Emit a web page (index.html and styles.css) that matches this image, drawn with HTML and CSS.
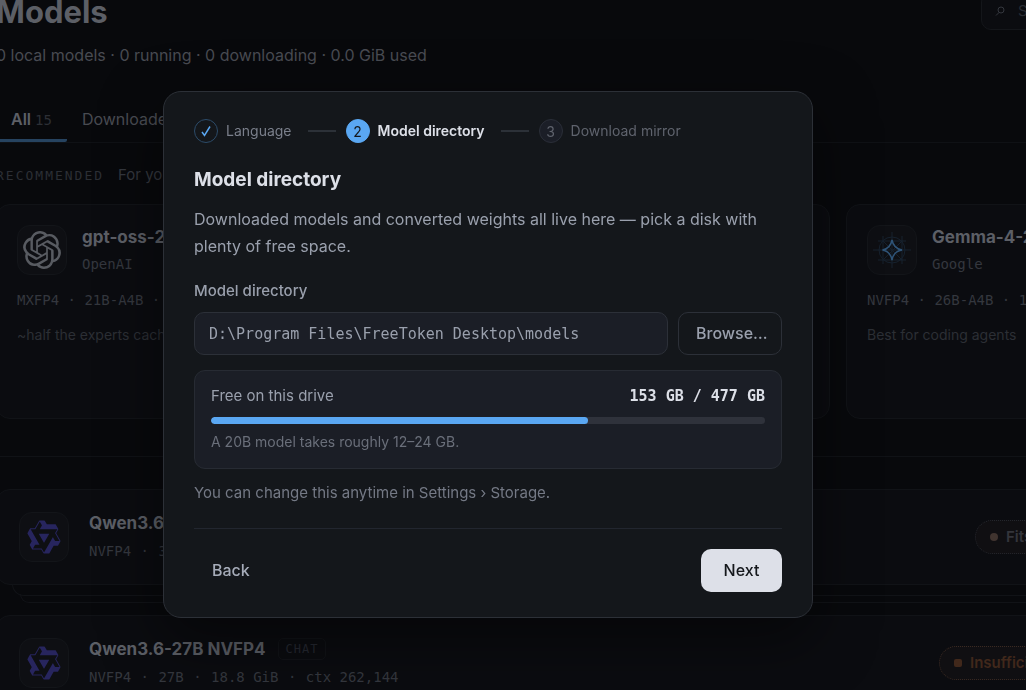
FILE: index.html
```html
<!DOCTYPE html>
<html lang="en">
<head>
    <meta charset="UTF-8">
    <meta name="viewport" content="width=device-width, initial-scale=1.0">
    <title>FreeToken Desktop</title>
    <link rel="stylesheet" href="styles.css">
</head>
<body>

    <!-- Shared logo shapes -->
    <svg class="sprite" aria-hidden="true">
        <symbol id="logo-qwen" viewBox="0 0 24 24">
            <path d="M12.604 1.34c.393.69.784 1.382 1.174 2.075a.18.18 0 00.157.091h5.552c.174 0 .322.11.446.327l1.454 2.57c.19.337.24.478.024.837-.26.43-.513.864-.76 1.3l-.367.658c-.106.196-.223.28-.04.512l2.652 4.637c.172.301.111.494-.043.77-.437.785-.882 1.564-1.335 2.34-.159.272-.352.375-.68.37-.777-.016-1.552-.01-2.327.016a.099.099 0 00-.081.05 575.097 575.097 0 01-2.705 4.74c-.169.293-.38.363-.725.364-.997.003-2.002.004-3.017.002a.537.537 0 01-.465-.271l-1.335-2.323a.09.09 0 00-.083-.049H4.982c-.285.03-.553-.001-.805-.092l-1.603-2.77a.543.543 0 01-.002-.54l1.207-2.12a.198.198 0 000-.197 550.951 550.951 0 01-1.875-3.272l-.79-1.395c-.16-.31-.173-.496.095-.965.465-.813.927-1.625 1.387-2.436.132-.234.304-.334.584-.335a338.3 338.3 0 012.589-.001.124.124 0 00.107-.063l2.806-4.895a.488.488 0 01.422-.246c.524-.001 1.053 0 1.583-.006L11.704 1c.341-.003.724.032.9.34zm-3.432.403a.06.06 0 00-.052.03L6.254 6.788a.157.157 0 01-.135.078H3.253c-.056 0-.07.025-.041.074l5.81 10.156c.025.042.013.062-.034.063l-2.795.015a.218.218 0 00-.2.116l-1.32 2.31c-.044.078-.021.118.068.118l5.716.008c.046 0 .08.02.104.061l1.403 2.454c.046.081.092.082.139 0l5.006-8.76.783-1.382a.055.055 0 01.096 0l1.424 2.53a.122.122 0 00.107.062l2.763-.02a.04.04 0 00.035-.02.041.041 0 000-.04l-2.9-5.086a.108.108 0 010-.113l.293-.507 1.12-1.977c.024-.041.012-.062-.035-.062H9.2c-.059 0-.073-.026-.043-.077l1.434-2.505a.107.107 0 000-.114L9.225 1.774a.06.06 0 00-.053-.031zm6.29 8.02c.046 0 .058.02.034.06l-.832 1.465-2.613 4.585a.056.056 0 01-.05.029.058.058 0 01-.05-.029L8.498 9.841c-.02-.034-.01-.052.028-.054l.216-.012 6.722-.012z"/>
        </symbol>
    </svg>

    <!-- Models page behind the dialog -->
    <main class="page">
        <header class="page-header">
            <div>
                <h1>Models</h1>
                <p class="summary">0 local models · 0 running · 0 downloading · 0.0 GiB used</p>
            </div>
            <div class="search">
                <svg class="search-icon" viewBox="0 0 12 12" aria-hidden="true">
                    <circle cx="7" cy="5" r="3"/>
                    <path d="M5 7.500L2 10.500"/>
                </svg>
                <input type="text" placeholder="Search models" aria-label="Search models">
            </div>
        </header>

        <nav class="tabs">
            <a href="#all" class="tab active">All <span class="count">15</span></a>
            <a href="#downloaded" class="tab">Downloaded</a>
        </nav>

        <div class="section-title">
            <h2>RECOMMENDED</h2>
            <p>For you</p>
        </div>

        <section class="cards">
            <article class="card">
                <div class="card-head">
                    <div class="logo">
                        <svg class="logo-openai" viewBox="0 0 24 24" aria-hidden="true">
                            <path d="M22.282 9.821a5.985 5.985 0 0 0-.516-4.910 6.046 6.046 0 0 0-6.510-2.900A6.065 6.065 0 0 0 4.981 4.182a5.985 5.985 0 0 0-3.998 2.900 6.046 6.046 0 0 0 .743 7.097 5.980 5.980 0 0 0 .510 4.911 6.051 6.051 0 0 0 6.515 2.900A5.985 5.985 0 0 0 13.260 24a6.056 6.056 0 0 0 5.772-4.206 5.990 5.990 0 0 0 3.998-2.900 6.056 6.056 0 0 0-.748-7.073zM13.260 22.430a4.476 4.476 0 0 1-2.876-1.041l.141-.080 4.779-2.758a.795.795 0 0 0 .392-.681v-6.737l2.020 1.169a.071.071 0 0 1 .038.052v5.583a4.504 4.504 0 0 1-4.494 4.493zM3.600 18.304a4.470 4.470 0 0 1-.535-3.014l.142.085 4.783 2.759a.771.771 0 0 0 .780 0l5.843-3.369v2.332a.080.080 0 0 1-.033.062L9.740 19.950a4.500 4.500 0 0 1-6.140-1.646zM2.340 7.896a4.485 4.485 0 0 1 2.366-1.973V11.600a.766.766 0 0 0 .388.676l5.815 3.355-2.020 1.168a.076.076 0 0 1-.071 0l-4.830-2.786A4.504 4.504 0 0 1 2.340 7.872zm16.597 3.855l-5.833-3.387L15.119 7.200a.076.076 0 0 1 .071 0l4.830 2.791a4.494 4.494 0 0 1-.676 8.105v-5.678a.790.790 0 0 0-.407-.667zm2.010-3.023l-.141-.085-4.774-2.782a.776.776 0 0 0-.785 0L9.409 9.230V6.897a.066.066 0 0 1 .028-.061l4.830-2.787a4.500 4.500 0 0 1 6.680 4.660zm-12.640 4.135l-2.020-1.164a.080.080 0 0 1-.038-.057V6.075a4.500 4.500 0 0 1 7.375-3.453l-.142.080L8.704 5.460a.795.795 0 0 0-.393.681zm1.097-2.365l2.602-1.500 2.607 1.500v2.999l-2.597 1.500-2.607-1.500z"/>
                        </svg>
                    </div>
                    <div>
                        <h3>gpt-oss-20b</h3>
                        <p class="vendor">OpenAI</p>
                    </div>
                </div>
                <p class="specs">MXFP4 · 21B-A4B · 12 GiB</p>
                <p class="note">~half the experts cached</p>
            </article>
            <article class="card"></article>
            <article class="card">
                <div class="card-head">
                    <div class="logo">
                        <svg class="logo-gemma" viewBox="0 0 40 40" aria-hidden="true">
                            <g class="guides">
                                <path d="M1 20H39M20 2V38M6 11H34M6 30H34M11 6V34M30 6V34"/>
                                <path d="M11 11L30 30M30 11L11 30"/>
                                <circle cx="20" cy="20" r="13"/>
                            </g>
                            <path class="star" d="M20 10C21 15.500 24 19 30 20C24 21 21 24.500 20 30C19 24.500 16 21 10.500 20C16 19 19 15.500 20 10Z"/>
                        </svg>
                    </div>
                    <div>
                        <h3>Gemma-4-26B</h3>
                        <p class="vendor">Google</p>
                    </div>
                </div>
                <p class="specs">NVFP4 · 26B-A4B · 16 GiB</p>
                <p class="note">Best for coding agents</p>
            </article>
        </section>

        <section class="model-list">
            <article class="row stacked">
                <div class="logo">
                    <svg class="logo-qwen"><use href="#logo-qwen"/></svg>
                </div>
                <div>
                    <h3>Qwen3.6-35B NVFP4</h3>
                    <p class="specs">NVFP4 <i>·</i> 35B <i>·</i> 22.1 GiB</p>
                </div>
                <div class="status fits"><span class="dot"></span>Fits</div>
            </article>
            <article class="row">
                <div class="logo">
                    <svg class="logo-qwen"><use href="#logo-qwen"/></svg>
                </div>
                <div>
                    <h3>Qwen3.6-27B NVFP4 <span class="tag">CHAT</span></h3>
                    <p class="specs">NVFP4 <i>·</i> 27B <i>·</i> 18.8 GiB <i>·</i> ctx 262,144</p>
                </div>
                <div class="status insufficient"><span class="dot"></span>Insufficient memory</div>
            </article>
        </section>
    </main>

    <!-- Setup dialog -->
    <div class="overlay">
        <form class="dialog" role="dialog" aria-labelledby="dialogTitle">
            <ol class="steps">
                <li class="step done">
                    <span class="badge">
                        <svg viewBox="0 0 12 12" aria-hidden="true"><path d="M2 7L4.500 10.500L10 1.500"/></svg>
                    </span>
                    Language
                </li>
                <li class="step current"><span class="badge">2</span>Model directory</li>
                <li class="step"><span class="badge">3</span>Download mirror</li>
            </ol>

            <h2 id="dialogTitle">Model directory</h2>
            <p class="intro">Downloaded models and converted weights all live here — pick a disk with plenty of free space.</p>

            <label for="directory">Model directory</label>
            <div class="picker">
                <input type="text" id="directory" name="directory" value="D:\Program Files\FreeToken Desktop\models">
                <button type="button" class="btn btn-outline">Browse…</button>
            </div>

            <div class="drive">
                <div class="drive-row">
                    <span>Free on this drive</span>
                    <strong>153 GB / 477 GB</strong>
                </div>
                <div class="meter"><div class="meter-fill" style="width: 68%"></div></div>
                <p>A 20B model takes roughly 12–24 GB.</p>
            </div>

            <p class="hint">You can change this anytime in Settings › Storage.</p>

            <div class="actions">
                <button type="button" class="btn btn-ghost">Back</button>
                <button type="submit" class="btn btn-primary">Next</button>
            </div>
        </form>
    </div>

</body>
</html>
```
FILE: styles.css
```css
/* General styles */
* {
    box-sizing: border-box;
}

html, body {
    height: 100%;
    margin: 0;
    overflow: hidden;
}

body {
    background-color: #08090c;
    color: #9aa0ad;
    font-family: Inter, "Liberation Sans", sans-serif;
    font-size: 15px;
    line-height: 24px;
}

h1, h2, h3, p, ol {
    margin: 0;
    padding: 0;
}

input, button {
    font: inherit;
}

.sprite {
    display: none;
}

/* Page behind the dialog, scrolled a little and wider than the window */
.page {
    height: 100%;
    margin: -8px -229px 0 -4px;
    color: #34373e;
}

.page-header {
    display: flex;
    justify-content: space-between;
    align-items: flex-start;
}

.page-header h1 {
    color: #5c5f66;
    font-size: 31px;
    line-height: 40px;
}

.summary {
    margin-top: 11px;
    color: #484b52;
    font-size: 16px;
}

/* Search box */
.search {
    display: flex;
    align-items: center;
    gap: 12px;
    width: 274px;
    height: 38px;
    padding: 0 12px;
    background-color: #0b0c10;
    border: 1px solid #14161a;
    border-radius: 10px;
}

.search-icon {
    width: 12px;
    height: 12px;
    fill: none;
    stroke: #34373e;
}

.search input {
    flex: 1;
    min-width: 0;
    padding: 0;
    background: none;
    border: none;
}

.search input::placeholder {
    color: #2a2d33;
}

/* Tabs */
.tabs {
    display: flex;
    margin-top: 28px;
    border-bottom: 1px solid #0f1115;
}

.tab {
    height: 47px;
    padding: 12px 15px;
    color: #484b52;
    font-size: 16px;
    text-decoration: none;
}

.tab.active {
    margin-bottom: -1px;
    color: #5c5f66;
    font-weight: 600;
    border-bottom: 3px solid #264360;
    border-radius: 0 0 2px 2px;
}

.count {
    color: #2c2f35;
    font: 14px "DejaVu Sans Mono", monospace;
}

.section-title {
    display: flex;
    align-items: center;
    gap: 14px;
    margin-top: 20px;
}

.section-title h2 {
    color: #2c2f35;
    font: 13px "DejaVu Sans Mono", monospace;
    letter-spacing: 2px;
}

/* Recommended cards */
.cards {
    display: grid;
    grid-template-columns: repeat(3, 1fr);
    gap: 16px;
    margin-top: 17px;
    padding-bottom: 37px;
    border-bottom: 1px solid #101216;
}

.card {
    min-height: 215px;
    padding: 20px;
    background-color: #0b0c10;
    border: 1px solid #111317;
    border-radius: 14px;
}

.card-head {
    display: flex;
    gap: 15px;
}

.logo {
    display: grid;
    place-items: center;
    width: 50px;
    height: 50px;
    background-color: #0e0f13;
    border: 1px solid #131519;
    border-radius: 13px;
}

.logo-openai {
    width: 38px;
    height: 38px;
    fill: #585b61;
}

.logo-gemma {
    width: 40px;
    height: 40px;
    fill: none;
}

.logo-gemma .guides {
    stroke: #1a2a3a;
    stroke-width: 1;
    opacity: 0.7;
}

.logo-gemma .star {
    stroke: #2f5478;
    stroke-width: 1.5;
}

.logo-qwen {
    width: 36px;
    height: 36px;
    fill: #27255e;
}

.page h3 {
    color: #5c5f66;
    font-size: 17px;
    line-height: 24px;
}

.vendor, .specs {
    font-family: "DejaVu Sans Mono", monospace;
    font-size: 14px;
}

.vendor {
    margin-top: 3px;
}

.card .specs {
    margin-top: 12px;
    line-height: 24px;
}

.note {
    margin-top: 11px;
    color: #2c2f35;
    font-size: 14px;
}

/* Model rows */
.model-list {
    display: grid;
    gap: 30px;
    padding-top: 32px;
}

.row {
    position: relative;
    display: flex;
    align-items: center;
    gap: 20px;
    height: 96px;
    padding: 0 22px;
    background-color: #0b0c10;
    border: 1px solid #111317;
    border-radius: 14px;
}

.row h3 {
    display: flex;
    align-items: center;
    gap: 12px;
}

.row .specs {
    margin-top: 4px;
}

.specs i {
    margin: 0 1px;
    font-style: normal;
}

/* Two edges peeking out below a group of models */
.stacked::before,
.stacked::after {
    content: "";
    position: absolute;
    border: solid #111317;
    border-width: 0 1px 1px;
    border-radius: 0 0 14px 14px;
}

.stacked::before {
    left: 15px;
    right: 15px;
    top: 94px;
    height: 11px;
}

.stacked::after {
    left: 23px;
    right: 23px;
    top: 104px;
    height: 8px;
}

.tag {
    padding: 0 7px;
    color: #252831;
    font: 12px/20px "DejaVu Sans Mono", monospace;
    letter-spacing: 1px;
    border: 1px solid #111317;
    border-radius: 5px;
}

.status {
    display: flex;
    align-items: center;
    gap: 8px;
    height: 34px;
    margin-left: auto;
    padding: 0 14px;
    font-weight: 600;
    background-color: #100f12;
    border: 1px dotted #24262c;
    border-radius: 17px;
}

.status .dot {
    width: 8px;
    height: 8px;
    background-color: currentColor;
    border-radius: 2px;
}

.fits {
    width: 257px;
    color: #34353b;
}

.fits .dot {
    background-color: #40342f;
    border-radius: 50%;
}

.insufficient {
    width: 293px;
    color: #41281b;
    border-color: #3a2a22;
}

/* Dialog */
.overlay {
    position: fixed;
    inset: 0;
    display: flex;
    align-items: center;
    justify-content: center;
    padding: 19px 50px 0 0;
}

.dialog {
    width: 650px;
    padding: 27px 30px 25px;
    background-color: #14171b;
    border: 1px solid #2c3037;
    border-radius: 18px;
    box-shadow: 0 20px 60px rgba(0, 0, 0, 0.5);
}

/* Progress steps */
.steps {
    display: flex;
    align-items: center;
    list-style: none;
    color: #5f636d;
    font-size: 14px;
}

.step {
    display: flex;
    align-items: center;
}

.step + .step::before {
    content: "";
    width: 28px;
    height: 2px;
    margin: 0 10px 0 16px;
    background-color: #2c3138;
}

.badge {
    display: grid;
    place-items: center;
    width: 24px;
    height: 24px;
    margin-right: 8px;
    background-color: #1b1e27;
    border: 1px solid #2a2e38;
    border-radius: 50%;
}

.done {
    color: #7a7f8b;
}

.done .badge {
    background: none;
    border-color: #2c4b69;
}

.done svg {
    width: 12px;
    height: 12px;
    fill: none;
    stroke: #5aa7f2;
    stroke-width: 1.5;
}

.current {
    color: #dde0e8;
    font-weight: 600;
}

.current .badge {
    color: #14171b;
    font-weight: 400;
    background-color: #5aa7f2;
    border-color: #5aa7f2;
}

.dialog h2 {
    margin-top: 23px;
    color: #dde0e8;
    font-size: 19px;
    line-height: 28px;
}

.intro {
    margin-top: 12px;
    font-size: 16px;
    line-height: 27px;
}

.dialog label {
    display: block;
    margin-top: 19px;
    font-weight: 500;
}

.picker {
    display: flex;
    gap: 10px;
    margin-top: 9px;
}

.picker input {
    flex: 1;
    min-width: 0;
    height: 43px;
    padding: 0 14px;
    color: #9aa0ad;
    font-family: "DejaVu Sans Mono", monospace;
    background-color: #1b1e26;
    border: 1px solid #2c3038;
    border-radius: 10px;
}

/* Buttons */
.btn {
    height: 43px;
    padding: 0 17px 2px;
    font-size: 16px;
    font-weight: 500;
    border: 1px solid transparent;
    border-radius: 10px;
    cursor: pointer;
}

.btn-outline {
    width: 104px;
    color: #9aa0ad;
    background: none;
    border-color: #2c3038;
}

.btn-ghost {
    color: #a6acb9;
    background: none;
}

.btn-primary {
    width: 81px;
    color: #14171b;
    background-color: #dde0e8;
}

/* Free space */
.drive {
    margin-top: 15px;
    padding: 13px 16px 15px;
    background-color: #1b1e26;
    border: 1px solid #272b33;
    border-radius: 11px;
}

.drive-row {
    display: flex;
    justify-content: space-between;
}

.drive strong {
    color: #dde0e8;
    font-family: "DejaVu Sans Mono", monospace;
}

.meter {
    height: 7px;
    margin-top: 9px;
    overflow: hidden;
    background-color: #2f323b;
    border-radius: 4px;
}

.meter-fill {
    height: 100%;
    background-color: #5aa7f2;
    border-radius: 4px;
}

.drive p {
    margin-top: 7px;
    color: #6a6f7a;
    font-size: 14px;
    line-height: 22px;
}

.hint {
    margin-top: 12px;
    color: #747985;
}

.actions {
    display: flex;
    justify-content: space-between;
    margin-top: 23px;
    padding-top: 20px;
    border-top: 1px solid #22262f;
}
```
